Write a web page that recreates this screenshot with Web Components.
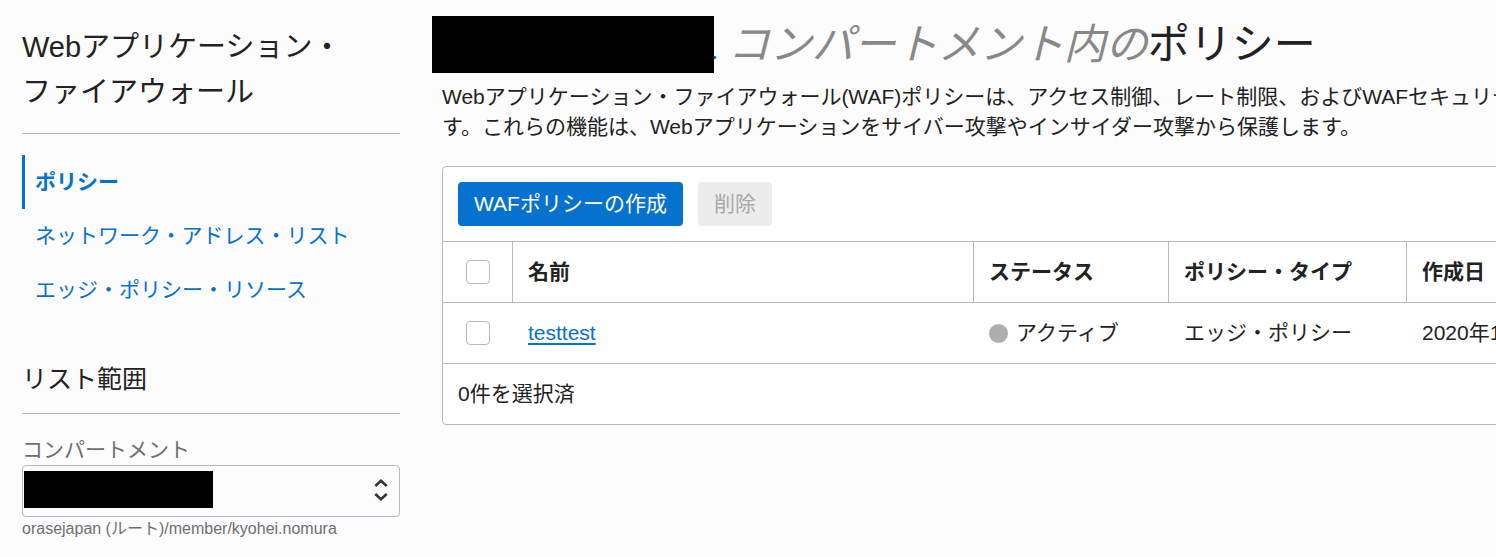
<!DOCTYPE html>
<html lang="ja">
<head>
<meta charset="utf-8">
<meta name="viewport" content="width=device-width, initial-scale=1">
<title>ポリシー</title>
<style>
  html {
    --text: #222;
    --muted: #6f6f6f;
    --blue: #0572ce;
    --line: #b4bac4;
    --page: #fcfcfc;
  }
  body {
    margin: 0;
    overflow-x: hidden;
    background: var(--page);
    color: var(--text);
    font: 21px/30px "Liberation Sans", "Noto Sans CJK JP", sans-serif;
    line-break: strict;
  }
</style>
</head>
<body>
<waf-app>
  <side-section slot="side" heading="Webアプリケーション・ファイアウォール" large>
    <nav-list>
      <nav-item href="#policies" active>ポリシー</nav-item>
      <nav-item href="#address-lists">ネットワーク・アドレス・リスト</nav-item>
      <nav-item href="#edge-resources">エッジ・ポリシー・リソース</nav-item>
    </nav-list>
  </side-section>
  <side-section slot="side" heading="リスト範囲">
    <compartment-select label="コンパートメント">orasejapan (ルート)/member/kyohei.nomura</compartment-select>
  </side-section>

  <page-title><em slot="scope">コンパートメント内の</em>ポリシー</page-title>
  <page-intro>Webアプリケーション・ファイアウォール(WAF)ポリシーは、アクセス制御、レート制限、およびWAFセキュリテ<br>す。これらの機能は、Webアプリケーションをサイバー攻撃やインサイダー攻撃から保護します。</page-intro>
  <policy-table>
    <action-button slot="actions" primary>WAFポリシーの作成</action-button>
    <action-button slot="actions" disabled>削除</action-button>
    <span slot="footer">0件を選択済</span>
  </policy-table>
</waf-app>

<script>
// Attaches the shadow root shared by every element below
class BaseElement extends HTMLElement {
  constructor() {
    super()
    this.attachShadow({mode: 'open'})
    this.shadowRoot.innerHTML = this.constructor.body
  }

  $(selector) {
    return this.shadowRoot.querySelector(selector)
  }
}

class WafApp extends BaseElement {
  static body = `<style>
    :host {
      display: grid;
      grid-template-columns: 378px minmax(0, 1fr);
      column-gap: 42px;
      padding-left: 22px;
      overflow: hidden;
    }
    aside {
      padding-top: 25px;
    }
    main {
      padding-top: 16px;
    }
  </style>
  <aside><slot name="side"></slot></aside>
  <main><slot></slot></main>`
}

class SideSection extends BaseElement {
  static body = `<style>
    :host {
      display: block;
      margin-bottom: 43px;
    }
    h2 {
      margin: 0 0 21px;
      padding: 0 30px 15px 0;
      border-bottom: 1px solid var(--line);
      font-size: 25px;
      line-height: 38px;
      font-weight: normal;
    }
    :host([large]) h2 {
      padding-bottom: 18px;
      font-size: 29px;
      line-height: 45px;
    }
    :host(:last-of-type) {
      margin-bottom: 0;
    }
  </style>
  <h2></h2>
  <slot></slot>`

  connectedCallback() {
    this.$('h2').innerText = this.getAttribute('heading')
  }
}

class NavList extends BaseElement {
  static body = `<style>
    :host {
      display: block;
    }
    nav {
      display: flex;
      flex-direction: column;
    }
  </style>
  <nav><slot></slot></nav>`
}

class NavItem extends BaseElement {
  static body = `<style>
    :host {
      display: block;
    }
    a {
      display: block;
      padding: 12px 10px;
      border-left: 3px solid transparent;
      color: var(--blue);
      text-decoration: none;
    }
    :host([active]) a {
      border-color: var(--blue);
      font-weight: bold;
    }
  </style>
  <a><slot></slot></a>`

  connectedCallback() {
    this.$('a').href = this.getAttribute('href')
  }
}

class CompartmentSelect extends BaseElement {
  static body = `<style>
    :host {
      display: block;
      color: var(--muted);
    }
    label {
      display: block;
    }
    .field {
      position: relative;
    }
    select {
      display: block;
      appearance: none;
      box-sizing: border-box;
      width: 100%;
      height: 52px;
      padding: 0 40px 0 15px;
      border: 1px solid var(--line);
      border-radius: 4px;
      background: var(--page);
      color: var(--text);
      font: inherit;
    }
    .mask {
      position: absolute;
      top: 6px;
      left: 2px;
      width: 50%;
      height: 37px;
      background: #000;
      pointer-events: none;
    }
    svg {
      position: absolute;
      top: 12px;
      right: 12px;
      pointer-events: none;
    }
    .path {
      font-size: 16px;
      line-height: 24px;
    }
  </style>
  <label for="compartment"></label>
  <div class="field">
    <select id="compartment"><option></option></select>
    <div class="mask"></div>
    <svg width="14" height="26" viewBox="0 0 14 26" fill="none" stroke="#333" stroke-width="2.6">
      <path d="M1.3 9 7 3.7 12.7 9M1.3 17 7 22.3l5.7-5.3"/>
    </svg>
  </div>
  <div class="path"><slot></slot></div>`

  connectedCallback() {
    this.$('label').innerText = this.getAttribute('label')
  }
}

class PageTitle extends BaseElement {
  static body = `<style>
    :host {
      display: block;
    }
    h1 {
      margin: 0 0 9px -10px;
      font-size: 42px;
      line-height: 57px;
      font-weight: normal;
      white-space: nowrap;
    }
    a {
      display: inline-block;
      position: relative;
      width: 284px;
      color: var(--blue);
      text-align: right;
      text-decoration: none;
      vertical-align: top;
    }
    /* covers the compartment name */
    a::after {
      content: "";
      position: absolute;
      inset: 0 2px 0 0;
      background: #000;
    }
    ::slotted(em) {
      color: #888;
    }
  </style>
  <h1><a href="#compartment">a</a> <slot name="scope"></slot><slot></slot></h1>`
}

class PageIntro extends BaseElement {
  static body = `<style>
    :host {
      display: block;
      margin-bottom: 24px;
    }
    p {
      margin: 0;
      white-space: nowrap;
    }
  </style>
  <p><slot></slot></p>`
}

class ActionButton extends BaseElement {
  static body = `<style>
    :host {
      display: block;
    }
    button {
      display: block;
      height: 44px;
      padding: 0 16px;
      border: 0;
      border-radius: 4px;
      background: #ececec;
      color: var(--text);
      font: inherit;
    }
    button:disabled {
      color: #aaa;
    }
    :host([primary]) button {
      background: var(--blue);
      color: #fff;
    }
  </style>
  <button type="button"><slot></slot></button>`

  connectedCallback() {
    this.$('button').disabled = this.hasAttribute('disabled')
  }
}

class StatusLabel extends BaseElement {
  static body = `<style>
    :host {
      display: flex;
      align-items: center;
      gap: 8px;
    }
    .dot {
      width: 19px;
      height: 19px;
      border-radius: 50%;
      background: #aeaeae;
    }
  </style>
  <span class="dot"></span><span><slot></slot></span>`
}

class PolicyTable extends BaseElement {
  static body = `<style>
    :host {
      display: block;
      /* the list runs on past the right edge of the window */
      margin-right: -81px;
      border: 1px solid var(--line);
      border-radius: 4px;
      background: #fff;
    }
    .actions {
      display: flex;
      gap: 15px;
      padding: 15px;
    }
    table {
      width: 100%;
      table-layout: fixed;
      border-collapse: separate;
      border-spacing: 0;
    }
    th, td {
      box-sizing: border-box;
      height: 61px;
      padding: 0 15px;
      border-top: 1px solid var(--line);
      text-align: left;
      white-space: nowrap;
    }
    th + th {
      border-left: 1px solid var(--line);
    }
    td + td {
      padding-left: 16px;
    }
    .check {
      width: 69px;
      padding: 0 0 0 23px;
    }
    .status {
      width: 195px;
    }
    .type {
      width: 238px;
    }
    .created {
      width: 170px;
    }
    input {
      display: block;
      appearance: none;
      box-sizing: border-box;
      width: 24px;
      height: 24px;
      margin: 0;
      border: 1px solid var(--line);
      border-radius: 4px;
      background: #fff;
    }
    a {
      color: var(--blue);
      text-decoration-thickness: 2px;
      text-underline-offset: 3px;
    }
    .footer {
      padding: 15px;
      border-top: 1px solid var(--line);
    }
  </style>
  <div class="actions"><slot name="actions"></slot></div>
  <table>
    <thead>
      <tr>
        <th class="check"><input type="checkbox" aria-label="すべて選択"></th>
        <th>名前</th>
        <th class="status">ステータス</th>
        <th class="type">ポリシー・タイプ</th>
        <th class="created">作成日</th>
      </tr>
    </thead>
    <tbody>
      <tr>
        <td class="check"><input type="checkbox" aria-label="testtest"></td>
        <td><a href="#testtest">testtest</a></td>
        <td><status-label>アクティブ</status-label></td>
        <td>エッジ・ポリシー</td>
        <td>2020年1</td>
      </tr>
    </tbody>
  </table>
  <div class="footer"><slot name="footer"></slot></div>`
}

customElements.define('waf-app', WafApp)
customElements.define('side-section', SideSection)
customElements.define('nav-list', NavList)
customElements.define('nav-item', NavItem)
customElements.define('compartment-select', CompartmentSelect)
customElements.define('page-title', PageTitle)
customElements.define('page-intro', PageIntro)
customElements.define('action-button', ActionButton)
customElements.define('status-label', StatusLabel)
customElements.define('policy-table', PolicyTable)
</script>
</body>
</html>
